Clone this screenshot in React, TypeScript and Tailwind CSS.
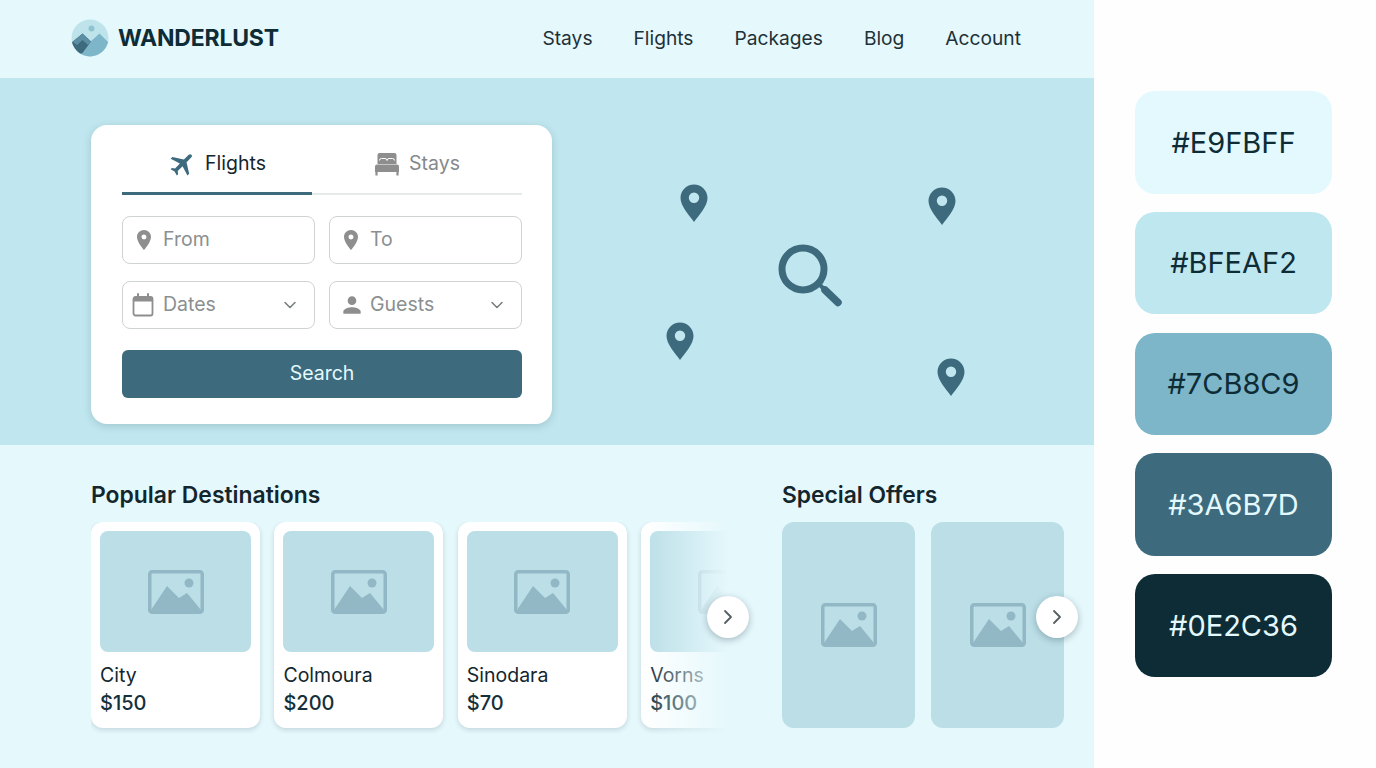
import { ChevronDown, ChevronRight } from 'lucide-react';
import { MdFlight, MdLocationOn, MdPerson } from 'react-icons/md';

const swatches = [
  { hex: '#E9FBFF', box: 'bg-[#E4F9FD]', text: 'text-[#0E2C36]' },
  { hex: '#BFEAF2', box: 'bg-[#BFE7EF]', text: 'text-[#0E2C36]' },
  { hex: '#7CB8C9', box: 'bg-[#7CB6C8]', text: 'text-[#0E2C36]' },
  { hex: '#3A6B7D', box: 'bg-[#3D6B7D]', text: 'text-[#E4F9FD]' },
  { hex: '#0E2C36', box: 'bg-[#0E2C36]', text: 'text-[#E4F9FD]' },
];

const destinations = [
  { name: 'City', price: '$150' },
  { name: 'Colmoura', price: '$200' },
  { name: 'Sinodara', price: '$70' },
  { name: 'Vorns', price: '$100' },
];

const pins = [
  { id: 'a', className: 'left-[680px] top-[106px]' },
  { id: 'b', className: 'left-[928px] top-[109px]' },
  { id: 'c', className: 'left-[666px] top-[244px]' },
  { id: 'd', className: 'left-[937px] top-[280px]' },
];

const Logo = () => (
  <svg width="38" height="38" viewBox="0 0 38 38" className="shrink-0">
    <defs>
      <clipPath id="logo-clip">
        <circle cx="19" cy="19" r="18.5" />
      </clipPath>
    </defs>
    <g clipPath="url(#logo-clip)">
      <rect width="38" height="38" fill="#BFE3EA" />
      <circle cx="20.5" cy="9.5" r="3" fill="#8FC3D2" />
      <path d="M28.5 14.5 L38 24 L38 38 L8 38 L8 33 Z" fill="#7CB6C8" />
      <path d="M0 24 L11.5 14.5 L20 22.5 L11.5 34 L6 36 L0 30 Z" fill="#3D6B7D" />
      <path d="M11.5 14.5 L20 22.5 L17 26 L11.5 21 L6 26 L2 23 Z" fill="#5C8FA3" />
    </g>
  </svg>
);

const Pin = ({ className }: { className: string }) => (
  <svg width="28" height="38" viewBox="0 0 28 38" className={`absolute ${className}`}>
    <path
      fillRule="evenodd"
      d="M14 0.5 C6.5 0.5 0.5 6.5 0.5 14 C0.5 22 9 31 14 38 C19 31 27.5 22 27.5 14 C27.5 6.5 21.5 0.5 14 0.5 Z M14 8.5 A5.2 5.2 0 1 1 14 18.9 A5.2 5.2 0 1 1 14 8.5 Z"
      fill="#3D6B7D"
    />
  </svg>
);

const ImageIcon = () => (
  <svg width="56" height="44" viewBox="0 0 56 44" className="shrink-0">
    <rect x="1.75" y="1.75" width="52.5" height="40.5" rx="2.5" fill="none" stroke="#93B8C5" strokeWidth="3.5" />
    <circle cx="41" cy="13" r="4.5" fill="#93B8C5" />
    <path d="M3 40 L19 16 L31 28 L39 23 L53 40 L53 42 L3 42 Z" fill="#93B8C5" />
  </svg>
);

const CalendarIcon = () => (
  <svg width="22" height="24" viewBox="0 0 22 24" className="shrink-0">
    <rect x="1.5" y="4" width="19" height="18.5" rx="2" fill="none" stroke="#8E8E8E" strokeWidth="1.8" />
    <path d="M1.5 6 a2 2 0 0 1 2 -2 h15 a2 2 0 0 1 2 2 v2.5 h-19 Z" fill="#8E8E8E" />
    <path d="M6 1 v4 M16 1 v4" stroke="#8E8E8E" strokeWidth="2" strokeLinecap="round" />
  </svg>
);

const BedIcon = () => (
  <svg width="26" height="24" viewBox="0 0 26 24" className="shrink-0">
    <path d="M3.5 12 V3 a2 2 0 0 1 2 -2 h15 a2 2 0 0 1 2 2 v9 Z" fill="#8E8E8E" />
    <path d="M5.5 8.5 q0 -2 2 -2 h3.5 q2 0 2 2 M13 8.5 q0 -2 2 -2 h3.5 q2 0 2 2" fill="none" stroke="#FFFFFF" strokeWidth="1" />
    <path d="M1 14.5 a2 2 0 0 1 2 -2 h20 a2 2 0 0 1 2 2 V20 H1 Z" fill="#8E8E8E" />
    <path d="M2.5 20 v3.5 M23.5 20 v3.5" stroke="#8E8E8E" strokeWidth="2.2" />
  </svg>
);

const RoundNext = ({ className }: { className: string }) => (
  <button
    className={`absolute flex h-[42px] w-[42px] items-center justify-center rounded-full bg-white shadow-[0_2px_7px_rgba(14,44,54,0.3)] ${className}`}
  >
    <ChevronRight size={24} strokeWidth={1.8} className="text-[#555f63]" />
  </button>
);

const Field = ({ icon, label, chevron }: { icon: React.ReactNode; label: string; chevron?: boolean }) => (
  <div className="flex h-[48px] items-center rounded-lg border border-[#CFD3D4] bg-white pl-[9px] pr-[14px] text-[19.5px] text-[#8A8F91]">
    <span className="flex w-[31px] shrink-0 justify-start">{icon}</span>
    <span className="flex-1">{label}</span>
    {chevron && <ChevronDown size={20} strokeWidth={1.8} className="text-[#767b7d]" />}
  </div>
);

const DestinationCard = ({ name, price }: { name: string; price: string }) => (
  <div className="h-[206px] w-[169px] shrink-0 rounded-xl bg-white p-[9px] shadow-[0_2px_5px_rgba(14,44,54,0.16)]">
    <div className="flex h-[121px] items-center justify-center rounded-lg bg-[#BBDEE7]">
      <ImageIcon />
    </div>
    <div className="mt-[9px] text-[19.5px] leading-[28px] text-[#14262d]">{name}</div>
    <div className="text-[20px] font-medium leading-[28px] text-[#14303a]">{price}</div>
  </div>
);

const OfferCard = () => (
  <div className="flex h-[206px] w-[133px] items-center justify-center rounded-xl bg-[#BBDEE7]">
    <ImageIcon />
  </div>
);

export default function App() {
  return (
    <div className="flex h-[768px] w-[1376px] overflow-hidden bg-[#FEFEFE] font-['Inter',sans-serif]">
      <main className="flex w-[1094px] shrink-0 flex-col bg-[#E5F8FC]">
        <header className="flex h-[78px] shrink-0 items-center justify-between pb-[2px] pl-[71px] pr-[73px]">
          <div className="flex items-center gap-[9px]">
            <Logo />
            <span className="text-[23px] font-bold tracking-[-0.2px] text-[#0E2C36]">WANDERLUST</span>
          </div>
          <nav className="flex gap-[41px] text-[19.2px] text-[#1E3138]">
            <a>Stays</a>
            <a>Flights</a>
            <a>Packages</a>
            <a>Blog</a>
            <a>Account</a>
          </nav>
        </header>

        <section className="relative h-[367px] shrink-0 bg-[#C0E7EF] pl-[91px] pt-[47px]">
          <div className="h-[299px] w-[461px] rounded-2xl bg-white pl-[31px] pr-[30px] shadow-[0_2px_8px_rgba(14,44,54,0.18)]">
            <div className="flex h-[70px] border-b-2 border-[#E6E9EA]">
              <div className="-mb-[2px] flex w-[190px] items-center justify-center gap-[7px] border-b-[3px] border-[#3D6B7D] pt-[10px] text-[19.5px] text-[#14262d]">
                <MdFlight size={30} className="rotate-45 text-[#3D6B7D]" />
                Flights
              </div>
              <div className="flex flex-1 items-center justify-center gap-[9px] pt-[10px] text-[19.5px] text-[#85898B]">
                <BedIcon />
                Stays
              </div>
            </div>
            <div className="mt-[21px] grid grid-cols-[193px_193px] gap-x-[14px] gap-y-[17px]">
              <Field icon={<MdLocationOn size={24} className="text-[#8E8E8E]" />} label="From" />
              <Field icon={<MdLocationOn size={24} className="text-[#8E8E8E]" />} label="To" />
              <Field icon={<CalendarIcon />} label="Dates" chevron />
              <Field icon={<MdPerson size={26} className="text-[#8E8E8E]" />} label="Guests" chevron />
            </div>
            <button className="mt-[21px] h-[48px] w-full rounded-md bg-[#3D6B7D] text-[19.5px] text-[#E4F9FD]">
              Search
            </button>
          </div>

          {pins.map((pin) => (
            <Pin key={pin.id} className={pin.className} />
          ))}
          <svg width="66" height="66" viewBox="0 0 66 66" className="absolute left-[778px] top-[166px]">
            <circle cx="25" cy="25" r="21" fill="none" stroke="#3D6B7D" strokeWidth="7" />
            <path d="M42 41 L48 47" stroke="#3D6B7D" strokeWidth="4" />
            <path d="M47 46 L60 58.5" stroke="#3D6B7D" strokeWidth="7.5" strokeLinecap="round" />
          </svg>
        </section>

        <section className="relative flex flex-1 pl-[91px] pt-[36px]">
          <div className="w-[637px] shrink-0">
            <h2 className="h-[41px] text-[22.9px] font-semibold leading-[28px] text-[#14262d]">Popular Destinations</h2>
            <div className="relative flex gap-[14.4px] overflow-hidden pb-[6px]">
              {destinations.map((item) => (
                <DestinationCard key={item.name} name={item.name} price={item.price} />
              ))}
              <div className="absolute inset-y-0 right-0 w-[84px] bg-gradient-to-r from-[#E5F8FC]/0 to-[#E5F8FC]" />
            </div>
          </div>
          <div className="ml-[54px]">
            <h2 className="h-[41px] text-[22.8px] font-semibold leading-[28px] text-[#14262d]">Special Offers</h2>
            <div className="flex gap-[16px]">
              <OfferCard />
              <OfferCard />
            </div>
          </div>
          <RoundNext className="left-[707px] top-[151px]" />
          <RoundNext className="left-[1036px] top-[151px]" />
        </section>
      </main>

      <aside className="flex flex-1 flex-col gap-[18.2px] pl-[41px] pr-[44px] pt-[91px]">
        {swatches.map((swatch) => (
          <div
            key={swatch.hex}
            className={`flex h-[102.6px] items-center justify-center rounded-[20px] text-[29px] ${swatch.box} ${swatch.text}`}
          >
            {swatch.hex}
          </div>
        ))}
      </aside>
    </div>
  );
}
